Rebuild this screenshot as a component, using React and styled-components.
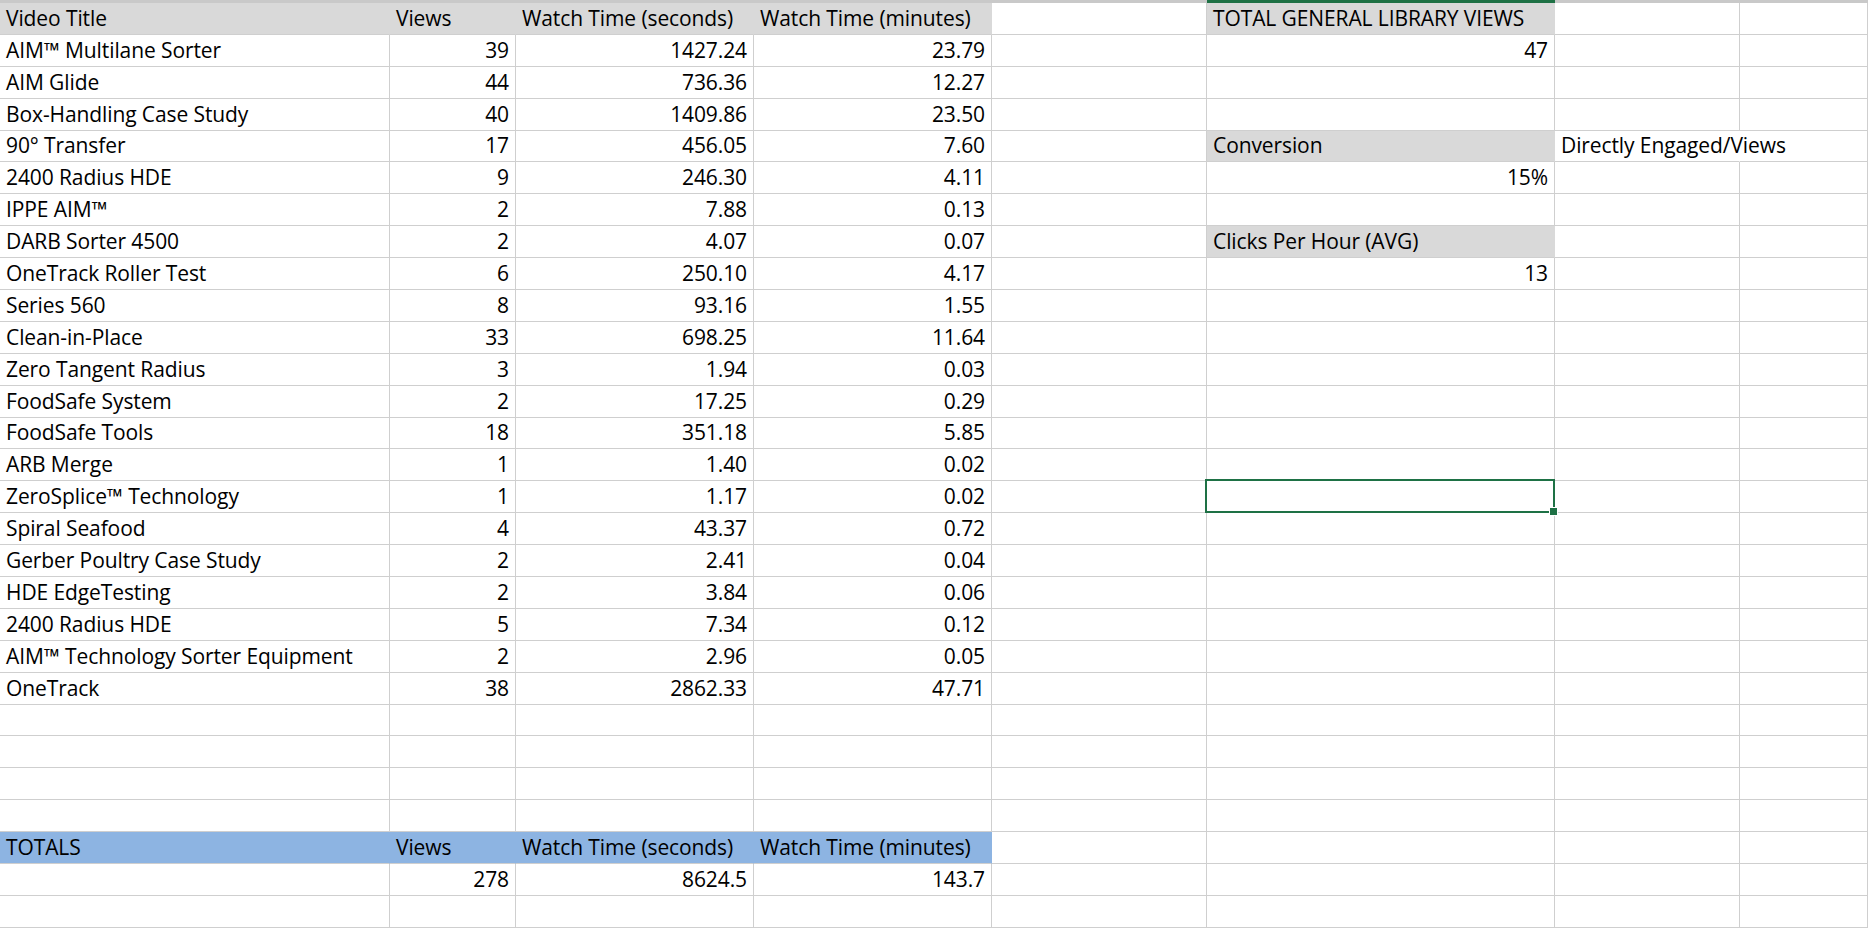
import React from "react";
import styled, { createGlobalStyle } from "styled-components";

const Global = createGlobalStyle`
  html, body { margin: 0; padding: 0; background: #fff; overflow: hidden; }
  body { font-family: "Open Sans", "Liberation Sans", sans-serif; }
`;

const COLS = [390, 126, 238, 238, 215, 348, 185, 128];
const ROWS = 29;

const TopBar = styled.div`
  display: grid;
  grid-template-columns: ${COLS.map((c) => c + "px").join(" ")};
  height: 3px;
`;
const TopSeg = styled.div`
  background: ${(p) => (p.$active ? "#1e7145" : "#c9c9c9")};
`;

const Sheet = styled.div`
  display: grid;
  grid-template-columns: ${COLS.map((c) => c + "px").join(" ")};
  grid-auto-rows: 31.9px;
  width: 1868px;
`;

const Cell = styled.div`
  position: relative;
  box-sizing: border-box;
  border-right: 1px solid ${(p) => (p.$noRight ? "transparent" : "#cfcfcf")};
  border-bottom: 1px solid #cfcfcf;
  background: ${(p) => p.$fill || "#fff"};
  ${(p) => (p.$fill ? `border-right-color: ${p.$fill};` : "")}
  display: flex;
  align-items: flex-end;
  justify-content: ${(p) => (p.$right ? "flex-end" : "flex-start")};
  padding: 0 6px 2px 6px;
  font-size: 21px;
  letter-spacing: -0.1px;
  color: #000;
  white-space: nowrap;
  overflow: visible;
  z-index: ${(p) => (p.$over ? 2 : 1)};
`;

const Selection = styled.div`
  position: absolute;
  inset: -2px -1px -1px -2px;
  border: 2px solid #1e7145;
  pointer-events: none;
`;
const Handle = styled.div`
  position: absolute;
  right: -5px;
  bottom: -5px;
  width: 7px;
  height: 7px;
  background: #1e7145;
  border: 1px solid #fff;
`;

const GRAY = "#d9d9d9";
const BLUE = "#8db4e2";

const data = [
  ["AIM™ Multilane Sorter", 39, "1427.24", "23.79"],
  ["AIM Glide", 44, "736.36", "12.27"],
  ["Box-Handling Case Study", 40, "1409.86", "23.50"],
  ["90° Transfer", 17, "456.05", "7.60"],
  ["2400 Radius HDE", 9, "246.30", "4.11"],
  ["IPPE AIM™", 2, "7.88", "0.13"],
  ["DARB Sorter 4500", 2, "4.07", "0.07"],
  ["OneTrack Roller Test", 6, "250.10", "4.17"],
  ["Series 560", 8, "93.16", "1.55"],
  ["Clean-in-Place", 33, "698.25", "11.64"],
  ["Zero Tangent Radius", 3, "1.94", "0.03"],
  ["FoodSafe System", 2, "17.25", "0.29"],
  ["FoodSafe Tools", 18, "351.18", "5.85"],
  ["ARB Merge", 1, "1.40", "0.02"],
  ["ZeroSplice™ Technology", 1, "1.17", "0.02"],
  ["Spiral Seafood", 4, "43.37", "0.72"],
  ["Gerber Poultry Case Study", 2, "2.41", "0.04"],
  ["HDE EdgeTesting", 2, "3.84", "0.06"],
  ["2400 Radius HDE", 5, "7.34", "0.12"],
  ["AIM™ Technology Sorter Equipment", 2, "2.96", "0.05"],
  ["OneTrack", 38, "2862.33", "47.71"],
];

function buildGrid() {
  const g = Array.from({ length: ROWS }, () =>
    Array.from({ length: 8 }, () => ({ t: "" }))
  );
  const hdr = ["Video Title", "Views", "Watch Time (seconds)", "Watch Time (minutes)"];
  hdr.forEach((t, i) => (g[0][i] = { t, fill: GRAY }));
  data.forEach((r, i) => {
    g[i + 1][0] = { t: r[0] };
    g[i + 1][1] = { t: String(r[1]), right: true };
    g[i + 1][2] = { t: r[2], right: true };
    g[i + 1][3] = { t: r[3], right: true };
  });
  ["TOTALS", "Views", "Watch Time (seconds)", "Watch Time (minutes)"].forEach(
    (t, i) => (g[26][i] = { t, fill: BLUE })
  );
  g[27][1] = { t: "278", right: true };
  g[27][2] = { t: "8624.5", right: true };
  g[27][3] = { t: "143.7", right: true };

  g[0][5] = { t: "TOTAL GENERAL LIBRARY VIEWS", fill: GRAY };
  g[1][5] = { t: "47", right: true };
  g[4][5] = { t: "Conversion", fill: GRAY };
  g[4][6] = { t: "Directly Engaged/Views", noRight: true, over: true };
  g[5][5] = { t: "15%", right: true };
  g[7][5] = { t: "Clicks Per Hour (AVG)", fill: GRAY };
  g[8][5] = { t: "13", right: true };
  g[15][5] = { t: "", sel: true };
  return g;
}

export default function App() {
  const grid = buildGrid();
  return (
    <>
      <Global />
      <TopBar>
        {COLS.map((_, i) => (
          <TopSeg key={i} $active={i === 5} />
        ))}
      </TopBar>
      <Sheet>
        {grid.map((row, r) =>
          row.map((c, ci) => (
            <Cell
              key={r + "-" + ci}
              $fill={c.fill}
              $right={c.right}
              $noRight={c.noRight}
              $over={c.over || c.sel}
            >
              {c.t}
              {c.sel && (
                <Selection>
                  <Handle />
                </Selection>
              )}
            </Cell>
          ))
        )}
      </Sheet>
    </>
  );
}
